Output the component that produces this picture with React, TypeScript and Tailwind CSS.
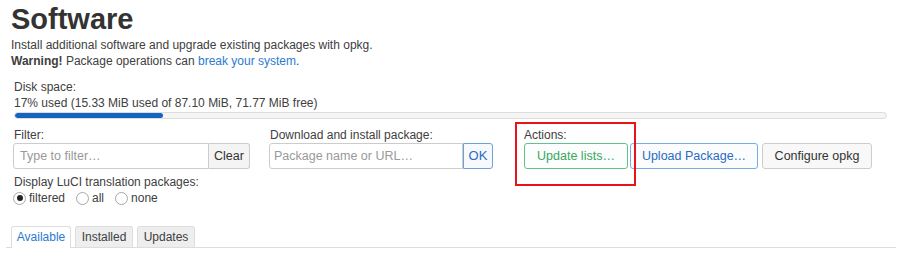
import React from "react";

const font = { fontFamily: '"Liberation Sans", Arial, sans-serif' };

function Radio({ checked, label }: { checked?: boolean; label: string }) {
  return (
    <label className="flex items-center mr-[11px]">
      <span className="w-[13px] h-[13px] rounded-full border border-[#a8a8a8] bg-white flex items-center justify-center mr-[3px]">
        {checked && <span className="w-[6px] h-[6px] rounded-full bg-[#222]" />}
      </span>
      {label}
    </label>
  );
}

export default function App() {
  const used = 17;
  return (
    <div className="w-[901px] h-[258px] bg-white text-[#404040] text-[12px] leading-[16px] overflow-hidden" style={font}>
      <div className="pl-[11px] pt-[2px]">
        <h2 className="text-[29px] leading-[34px] font-bold text-[#333]">Software</h2>
        <div className="mt-[1px]">Install additional software and upgrade existing packages with opkg.</div>
        <div>
          <strong>Warning!</strong> Package operations can{" "}
          <a className="text-[#2a7bd0]">break your system</a>.
        </div>
      </div>

      <div className="pl-[14px] pr-[14px] mt-[10px]">
        <div>Disk space:</div>
        <div>17% used (15.33 MiB used of 87.10 MiB, 71.77 MiB free)</div>
        <div className="mt-[1px] h-[7px] w-[873px] rounded-full border border-[#ddd] bg-[#f5f5f5] overflow-hidden">
          <div className="h-full bg-[#1565c0] rounded-full" style={{ width: `${used}%` }} />
        </div>
      </div>

      <div className="grid grid-cols-[256px_255px_auto] pl-[13px] mt-[8px]">
        <div>
          <div className="pl-[1px]">Filter:</div>
          <div className="flex h-[26px] w-[237px]">
            <div className="flex-1 border border-[#ccc] rounded-l-[3px] flex items-center px-[6px] text-[#999] text-[12.5px]">
              Type to filter…
            </div>
            <div className="w-[41px] border border-l-0 border-[#ccc] rounded-r-[3px] bg-[#f4f4f4] flex items-center justify-center text-[#333] text-[12.5px]">
              Clear
            </div>
          </div>
          <div className="mt-[5px] pl-[1px]">Display LuCI translation packages:</div>
          <div className="flex items-center">
            <Radio checked label="filtered" />
            <Radio label="all" />
            <Radio label="none" />
          </div>
        </div>
        <div>
          <div className="pl-[1px]">Download and install package:</div>
          <div className="flex h-[26px] w-[224px]">
            <div className="flex-1 border border-[#ccc] rounded-l-[3px] flex items-center px-[4px] text-[#999] text-[12.5px]">
              Package name or URL…
            </div>
            <div className="w-[30px] border border-[#6ea1dc] rounded-r-[3px] bg-[#f6f9fd] flex items-center justify-center text-[#2a6bbf] text-[13px]">
              OK
            </div>
          </div>
        </div>
        <div className="relative">
          <div className="absolute left-[-9px] top-[-5px] w-[121px] h-[64px] border-2 border-[#e8141a]" />
          <div>Actions:</div>
          <div className="flex">
            <div className="w-[104px] h-[26px] border border-[#62c38a] rounded-[3px] bg-[#fbfefc] flex items-center justify-center text-[#3aa560] text-[12.5px]">
              Update lists…
            </div>
            <div className="ml-[2px] w-[128px] h-[26px] border border-[#78ace6] rounded-[3px] bg-[#fbfcfe] flex items-center justify-center text-[#2a6bbf] text-[12.5px]">
              Upload Package…
            </div>
            <div className="ml-[4px] w-[110px] h-[26px] border border-[#ccc] rounded-[3px] bg-[#f8f8f8] flex items-center justify-center text-[#333] text-[12.5px]">
              Configure opkg
            </div>
          </div>
        </div>
      </div>

      <div className="flex items-end gap-[4px] mt-[20px] border-b border-[#ddd] ml-[6px] pl-[5px] mr-[5px]">
        <div className="w-[60px] h-[22px] flex items-center justify-center border border-b-0 border-[#ddd] rounded-t-[3px] bg-white text-[#2a7bd0] -mb-px pb-px">
          Available
        </div>
        <div className="w-[58px] h-[21px] flex items-center justify-center border border-b-0 border-[#ddd] rounded-t-[3px] bg-[#eee] text-[#404040]">
          Installed
        </div>
        <div className="w-[58px] h-[21px] flex items-center justify-center border border-b-0 border-[#ddd] rounded-t-[3px] bg-[#eee] text-[#404040]">
          Updates
        </div>
      </div>
    </div>
  );
}
